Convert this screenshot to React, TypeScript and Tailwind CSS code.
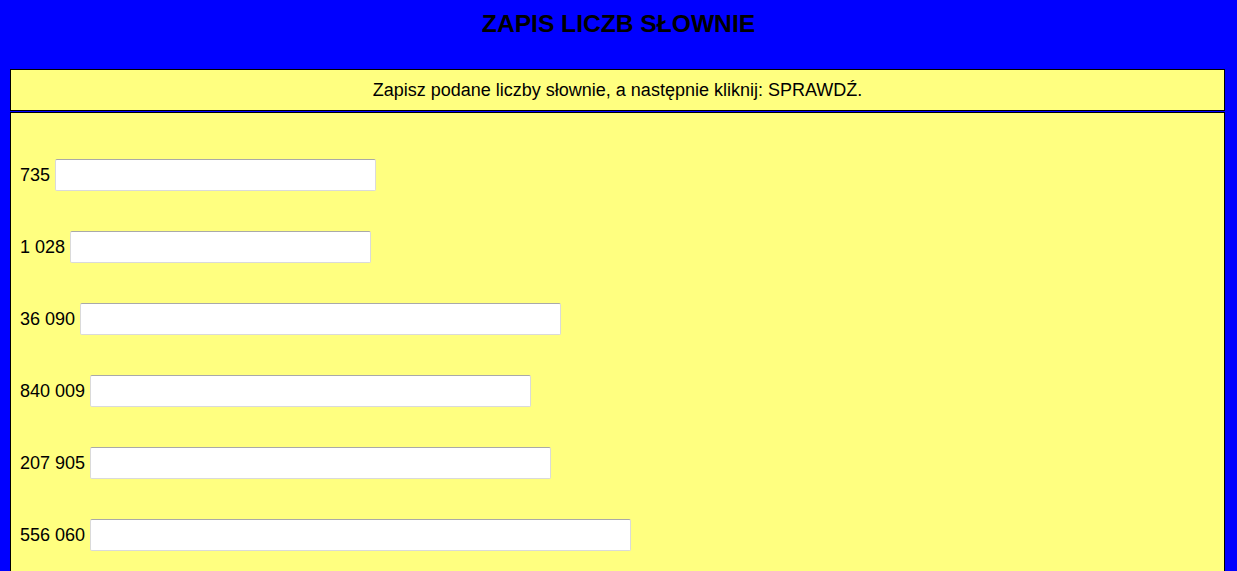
const numbers = [
  { label: '735', width: 'w-[321px]' },
  { label: '1 028', width: 'w-[301px]' },
  { label: '36 090', width: 'w-[481px]' },
  { label: '840 009', width: 'w-[441px]' },
  { label: '207 905', width: 'w-[461px]' },
  { label: '556 060', width: 'w-[541px]' },
]

export default function App() {
  return (
    <div className="min-h-screen bg-[#0000ff] text-black font-['Liberation_Sans',Arial,sans-serif] text-[18px]">
      {/* tytuł */}
      <h1 className="h-[69px] pt-[10px] text-center text-[24.6px] leading-[28px] font-bold">
        ZAPIS LICZB SŁOWNIE
      </h1>

      {/* polecenie */}
      <div className="ml-[10px] w-[1215px] h-[42px] border border-black bg-[#ffff80] flex items-center justify-center">
        Zapisz podane liczby słownie, a następnie kliknij: SPRAWDŹ.
      </div>

      {/* lista liczb */}
      <div className="ml-[10px] mt-[1px] w-[1215px] border-x border-t border-black bg-[#ffff80] pt-[46px] pl-[9px] pb-[30px] flex flex-col gap-[40px]">
        {numbers.map((n) => (
          <div key={n.label} className="flex items-center h-[32px]">
            <span className="whitespace-pre">{n.label} </span>
            <input
              type="text"
              className={`${n.width} h-[32px] bg-white border border-[#dadada] border-t-[#a9a9a9] rounded-[2px] px-1 outline-none`}
            />
          </div>
        ))}
      </div>
    </div>
  )
}
